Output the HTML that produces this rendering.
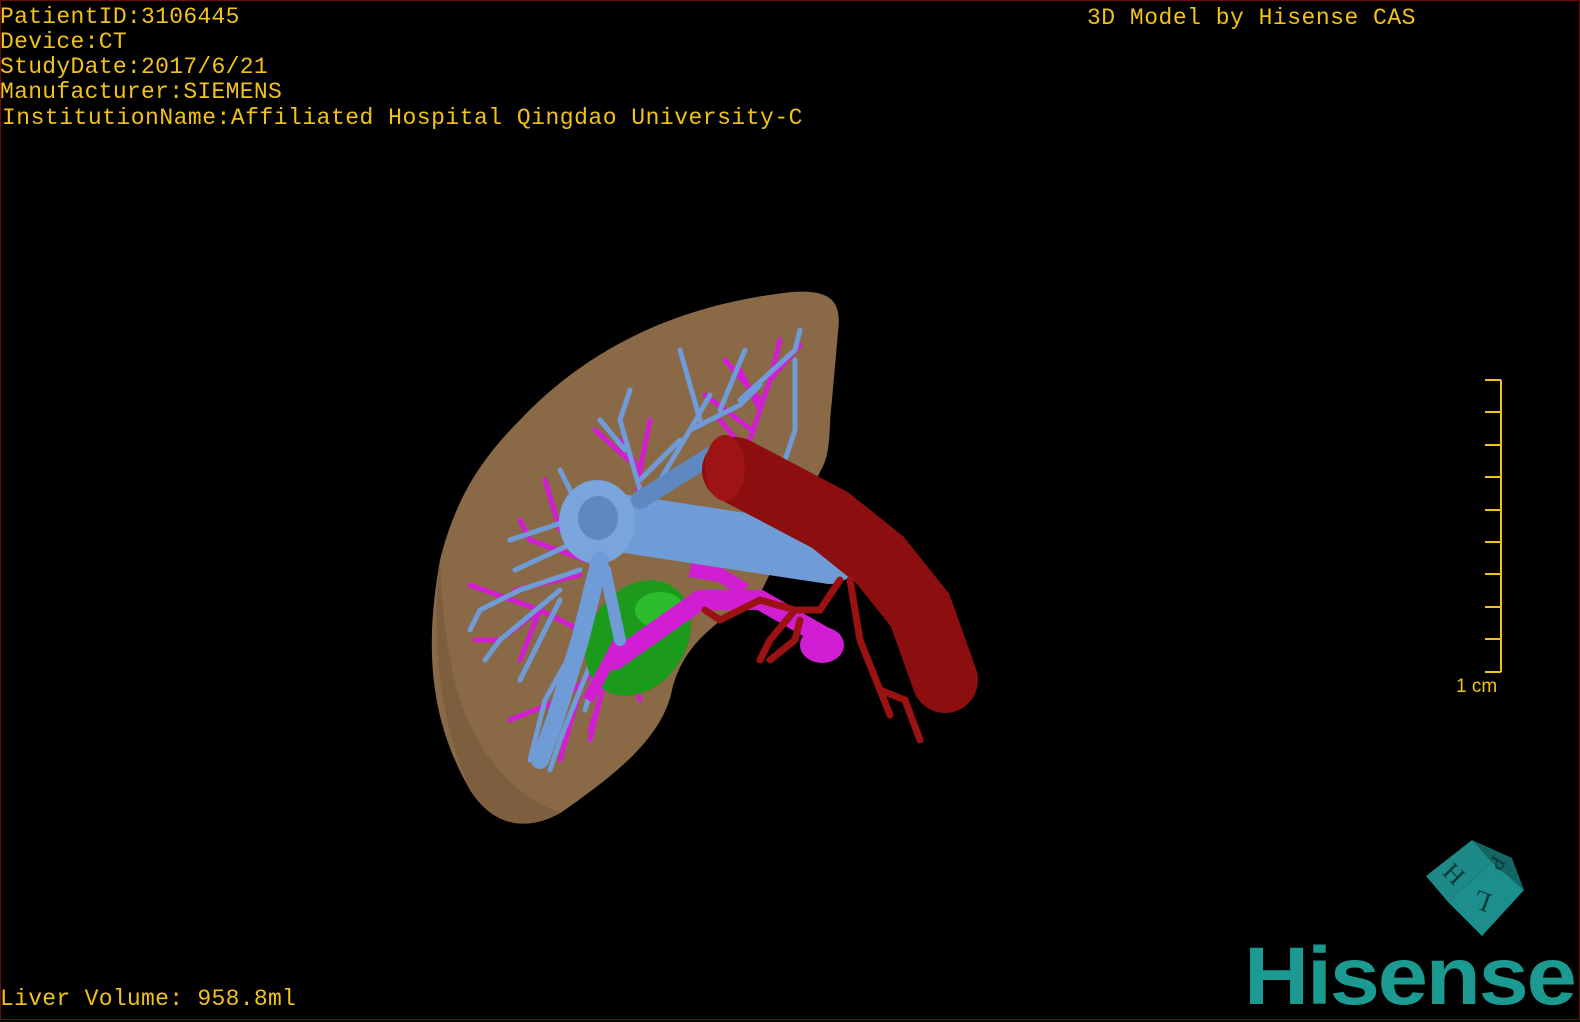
<!DOCTYPE html>
<html><head><meta charset="utf-8"><style>
html,body{margin:0;padding:0;background:#000;}
body{width:1580px;height:1020px;position:relative;overflow:hidden;}
.frame{position:absolute;left:0;top:0;width:1578px;height:1018px;border:1px solid #6a0c0c;}
.t{position:absolute;color:#f2c21c;font-family:"Liberation Mono",monospace;font-size:23px;white-space:pre;line-height:25px;}
</style></head><body>
<div class="frame"></div>
<div class="t" style="left:0;top:5px;letter-spacing:0.3px">PatientID:3106445</div>
<div class="t" style="left:0;top:30px;letter-spacing:0.3px">Device:CT</div>
<div class="t" style="left:0;top:55px;letter-spacing:0.3px">StudyDate:2017/6/21</div>
<div class="t" style="left:0;top:80px;letter-spacing:0.3px">Manufacturer:SIEMENS</div>
<div class="t" style="left:2px;top:106px;letter-spacing:0.5px">InstitutionName:Affiliated Hospital Qingdao University-C</div>
<div class="t" style="left:1087px;top:6px;letter-spacing:0.5px">3D Model by Hisense CAS</div>
<div class="t" style="left:0;top:987px;letter-spacing:0.3px">Liver Volume: 958.8ml</div>

<svg width="1580" height="1020" style="position:absolute;left:0;top:0">
 <g stroke="#f2c21c" stroke-width="2" fill="none">
  <line x1="1501" y1="380" x2="1501" y2="672"/>
  <line x1="1485" y1="380" x2="1501" y2="380"/><line x1="1485" y1="412" x2="1501" y2="412"/>
  <line x1="1485" y1="445" x2="1501" y2="445"/><line x1="1485" y1="477" x2="1501" y2="477"/>
  <line x1="1485" y1="510" x2="1501" y2="510"/><line x1="1485" y1="542" x2="1501" y2="542"/>
  <line x1="1485" y1="574" x2="1501" y2="574"/><line x1="1485" y1="607" x2="1501" y2="607"/>
  <line x1="1485" y1="639" x2="1501" y2="639"/><line x1="1485" y1="672" x2="1501" y2="672"/>
 </g>
 <text x="1456" y="692" fill="#f2c21c" font-family="Liberation Sans,sans-serif" font-size="19">1 cm</text>

 <path d="M520 420 C600 335,700 302,792 292 C832 289,842 302,838 332 L832 400 C828 432,832 452,820 472 L762 590 C722 620,684 640,672 690 C662 742,604 782,562 812 C522 835,492 822,470 790 C430 720,424 650,440 560 C455 500,480 460,520 420 Z" fill="#8a6a46"/>
 <path d="M440 560 C430 640,440 720,470 790 C490 822,522 835,560 812 C520 800,480 760,460 700 C445 650,442 600,440 560Z" fill="#7d5f3f"/>

 <g stroke="#d21ed2" stroke-width="5" fill="none" stroke-linecap="round">
  <path d="M740 470 L770 380 L780 340 M770 380 L800 345 M760 400 L725 360 M752 430 L705 395"/>
  <path d="M745 450 L720 420 M760 410 L740 370"/>
  <path d="M635 520 L640 470 L650 420 M640 470 L595 430 M640 470 L620 440"/>
  <path d="M585 560 L530 540 L520 520 M560 530 L545 480 M580 575 L515 590"/>
  <path d="M600 640 L540 610 L470 585 M540 610 L500 640 L475 640 M540 610 L520 660"/>
  <path d="M610 660 L560 700 L510 720 M580 690 L560 760 M600 700 L590 730"/>
  <path d="M615 640 L600 700 L590 740 M625 650 L640 700"/>
 </g>
 <g stroke="#6f9bd6" stroke-width="5" fill="none" stroke-linecap="round">
  <path d="M660 480 L690 430 L710 395 M690 430 L740 405 L760 385 M700 420 L680 350 M720 410 L745 350 M740 400 L795 350 L800 330 M795 360 L795 430 L785 460"/>
  <path d="M640 490 L620 420 L630 390 M625 450 L600 420 M640 480 L680 440"/>
  <path d="M580 510 L560 470 M570 520 L510 540 M580 540 L515 570"/>
  <path d="M580 570 L520 590 L480 610 L470 630 M560 590 L500 640 L485 660 M560 600 L520 680"/>
  <path d="M610 600 L600 660 L585 710 M590 620 L545 700 L530 760 M600 640 L560 740 L550 770 M615 630 L630 690 M620 600 L655 620"/>
 </g>

 <ellipse cx="638" cy="638" rx="48" ry="62" transform="rotate(35 638 638)" fill="#1c9a1c"/>
 <ellipse cx="660" cy="610" rx="25" ry="18" fill="#2cbc2c"/>

 <path d="M615 660 L700 600 L760 600 L830 640" stroke="#d21ed2" stroke-width="20" fill="none" stroke-linecap="round"/>
 <path d="M690 570 L720 575 L745 590" stroke="#d21ed2" stroke-width="14" fill="none"/>
 <ellipse cx="822" cy="645" rx="22" ry="18" fill="#d21ed2"/>
 <path d="M588 700 L620 640" stroke="#d21ed2" stroke-width="12"/>

 <path d="M600 520 L830 555" stroke="#6f9bd6" stroke-width="58" stroke-linecap="round" fill="none"/>
 <path d="M640 500 L720 450" stroke="#5f88c2" stroke-width="18" stroke-linecap="round"/>
 <ellipse cx="597" cy="522" rx="38" ry="42" fill="#7aa4dc"/>
 <ellipse cx="598" cy="518" rx="20" ry="22" fill="#5f88c2"/>
 <path d="M600 560 L580 640 L555 720 L540 760" stroke="#6f9bd6" stroke-width="18" fill="none" stroke-linecap="round"/>
 <path d="M605 570 L620 640" stroke="#6f9bd6" stroke-width="12" stroke-linecap="round"/>

 <path d="M735 470 L830 520 L880 560 L920 610 L945 680" stroke="#8c0e0e" stroke-width="66" stroke-linecap="round" fill="none"/>
 <ellipse cx="725" cy="468" rx="20" ry="33" fill="#9e1414"/>
 <g stroke="#9a1212" stroke-width="7" fill="none" stroke-linecap="round">
  <path d="M850 580 L860 640 L880 690 L905 700 L920 740 M880 690 L890 715"/>
  <path d="M840 580 L820 610 L795 610 L770 640 L760 660 M795 610 L760 600 L720 620 L705 610"/>
  <path d="M800 620 L795 640 L770 660"/>
 </g>
</svg>

<svg width="110" height="108" style="position:absolute;left:1420px;top:832px" viewBox="0 0 110 108">
 <polygon points="6,44 52,8 72,30 28,70" fill="#1e8a88"/>
 <polygon points="52,8 92,26 104,58 72,30" fill="#136664"/>
 <polygon points="28,70 72,30 104,58 62,104" fill="#1c8f8c"/>
 <text x="26" y="50" font-family="Liberation Serif,serif" font-size="26" fill="#0c3a3a" transform="rotate(45 34 40)">H</text>
 <text x="78" y="36" font-family="Liberation Serif,serif" font-size="22" fill="#0c3a3a" transform="rotate(120 80 28)">P</text>
 <text x="66" y="82" font-family="Liberation Serif,serif" font-size="28" fill="#0c3a3a" transform="rotate(200 68 72)">L</text>
</svg>
<div style="position:absolute;left:1244px;top:932px;font-family:'Liberation Sans',sans-serif;font-weight:bold;font-size:82px;color:#1a9a90;transform:scaleX(1.1);transform-origin:left top;letter-spacing:-2px;line-height:90px">Hisense</div>
</body></html>
